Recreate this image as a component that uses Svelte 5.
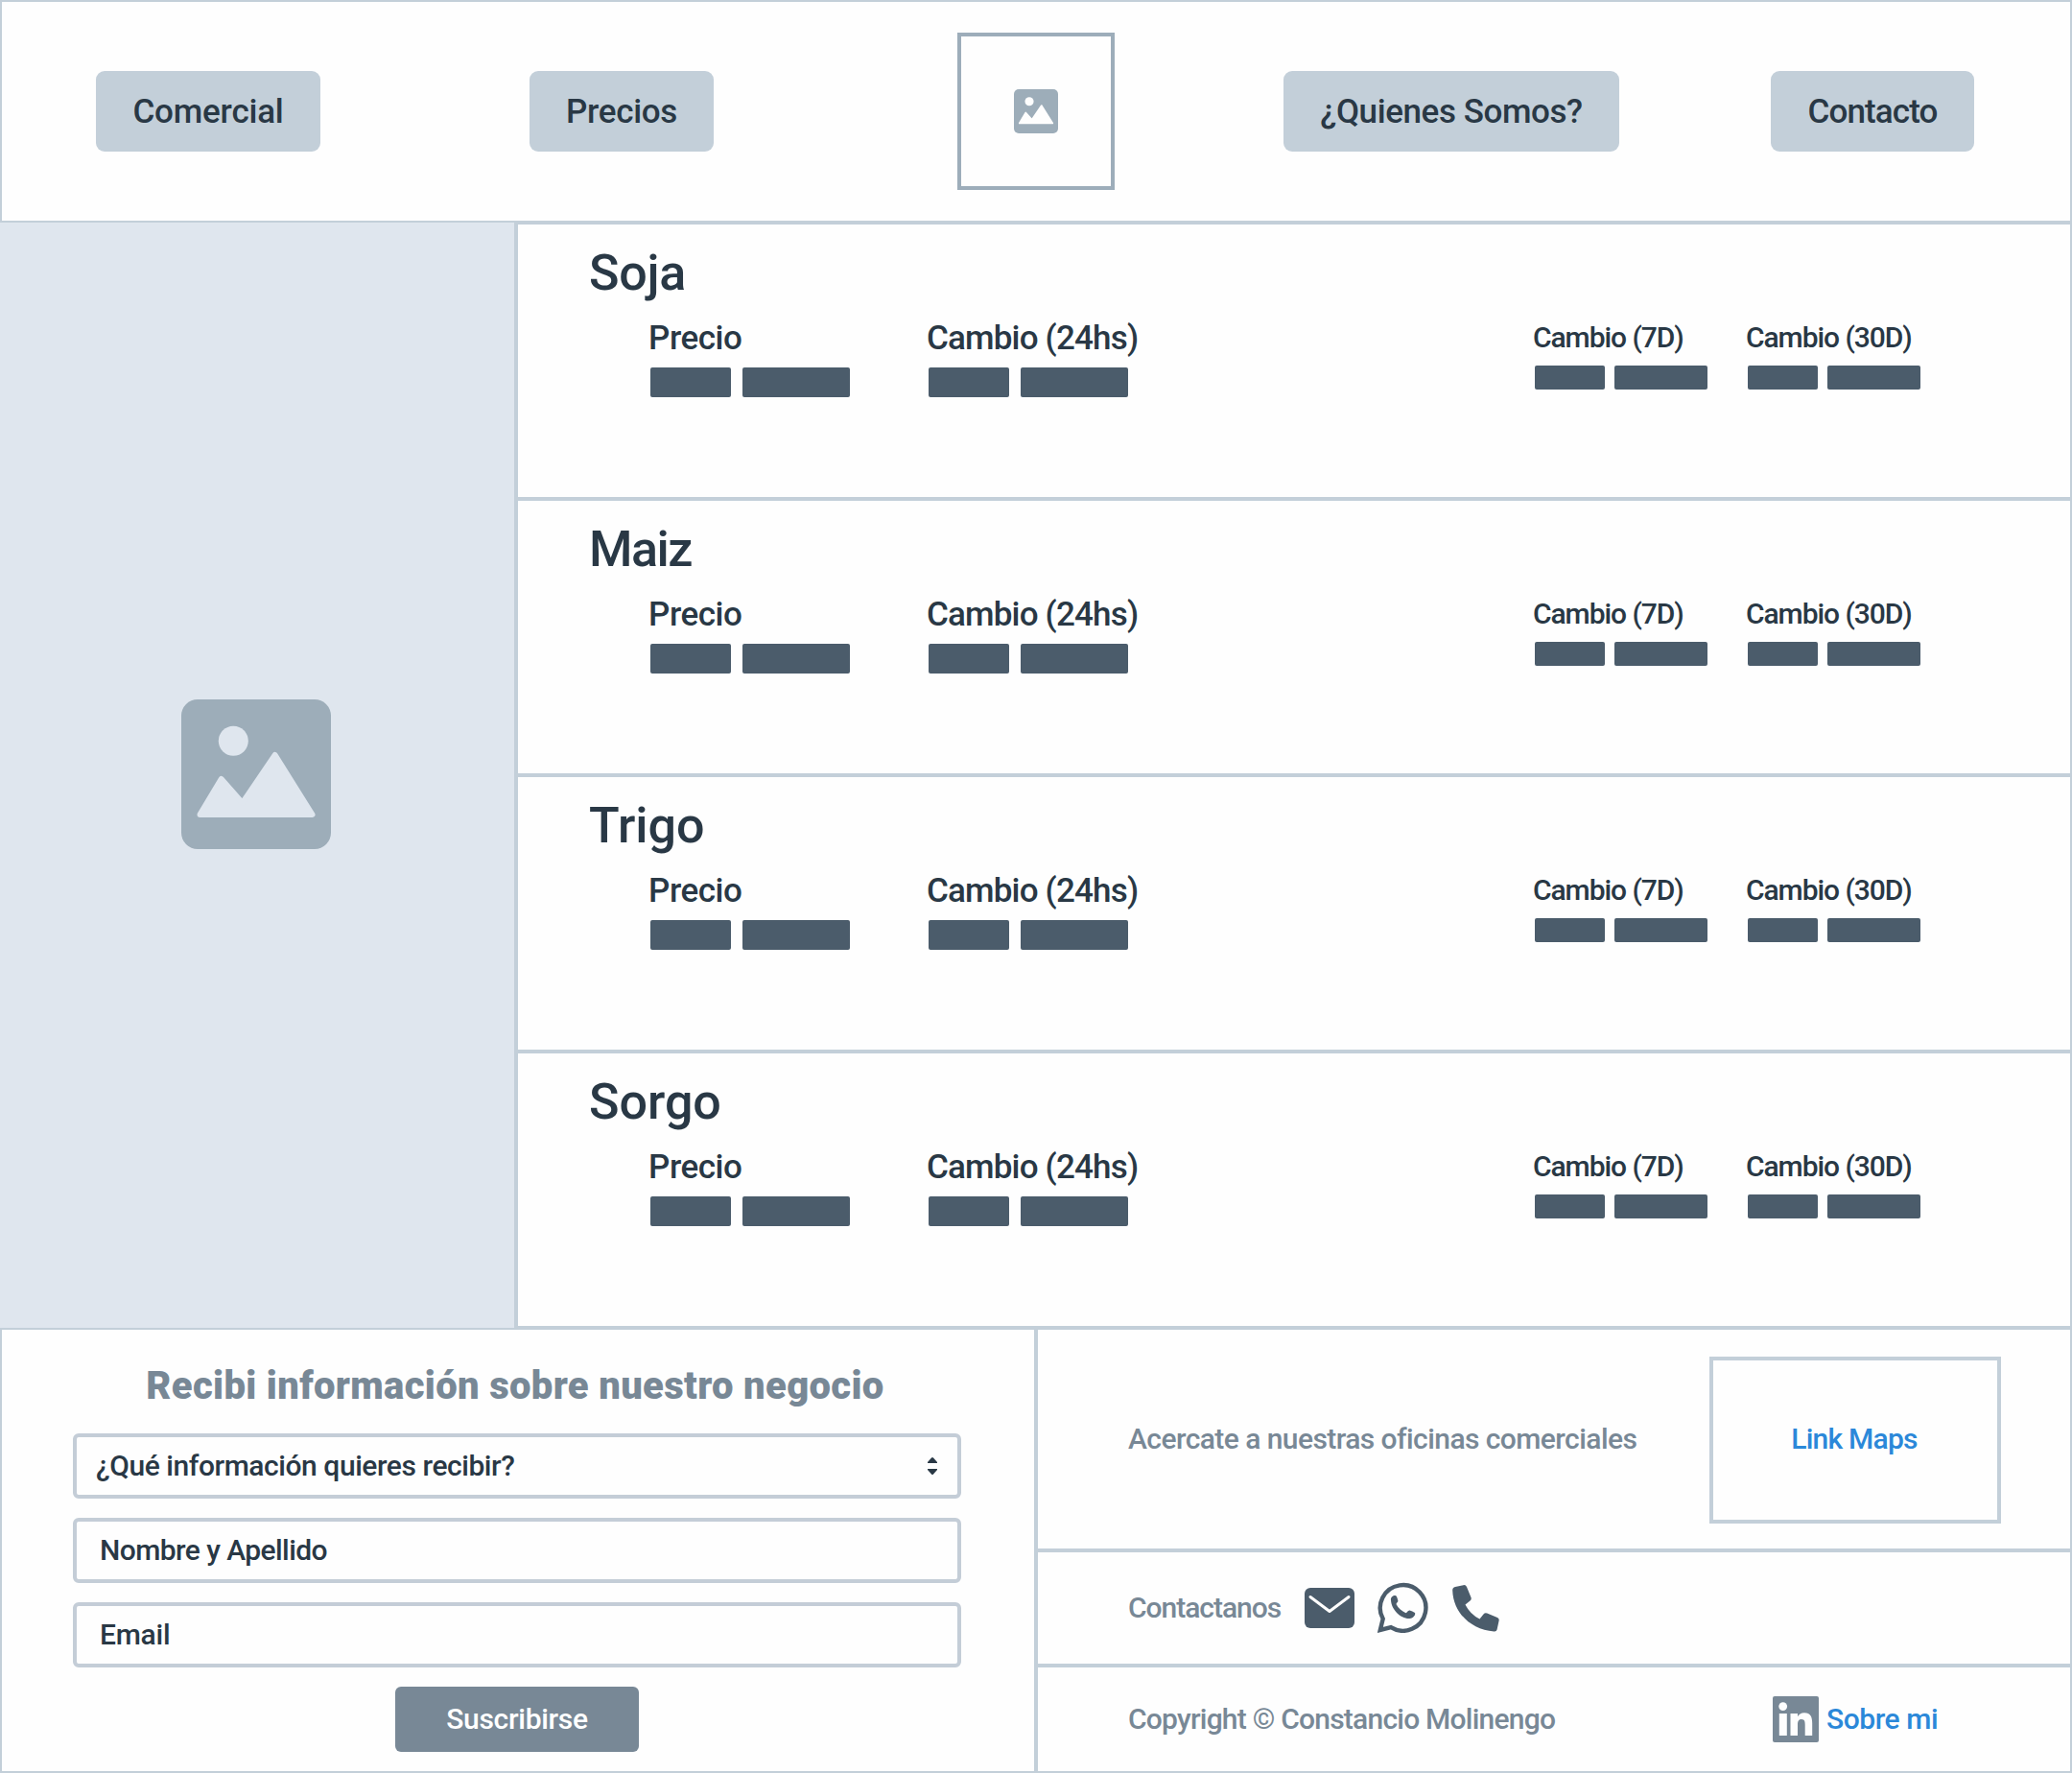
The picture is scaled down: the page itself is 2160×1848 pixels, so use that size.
<script>
  const rows = [
    { name: 'Soja', tone: 'snug' },
    { name: 'Maiz', tone: 'tight' },
    { name: 'Trigo', tone: '' },
    { name: 'Sorgo', tone: '' },
  ];
</script>

{#snippet picture(cls)}
  <svg class={cls} viewBox="0 0 156 156" aria-hidden="true">
    <rect class="pic-bg" width="156" height="156" rx="17" />
    <circle class="pic-fg" cx="54.3" cy="43.3" r="15.5" />
    <path class="pic-fg pic-hill" d="M19.5 120 L41.7 83 L63.7 108 L97.7 58 L136.5 120 Z" />
  </svg>
{/snippet}

{#snippet metric(label, size)}
  <div class="metric {size}">
    <span class="label">{label}</span>
    <div class="bars"><i class="bar short"></i><i class="bar long"></i></div>
  </div>
{/snippet}

<div class="page">
  <header>
    <button class="nav comercial">Comercial</button>
    <button class="nav precios">Precios</button>
    <div class="logo">{@render picture('pic-small')}</div>
    <button class="nav quienes">¿Quienes Somos?</button>
    <button class="nav contacto">Contacto</button>
  </header>

  <main>
    <aside>{@render picture('pic-large')}</aside>
    <div class="rows">
      {#each rows as row}
        <section>
          <h2 class={row.tone}>{row.name}</h2>
          <div class="metrics">
            {@render metric('Precio', 'big first')}
            {@render metric('Cambio (24hs)', 'big wide')}
            {@render metric('Cambio (7D)', 'small week')}
            {@render metric('Cambio (30D)', 'small')}
          </div>
        </section>
      {/each}
    </div>
  </main>

  <footer>
    <form>
      <h3>Recibi información sobre nuestro negocio</h3>
      <div class="field select">
        <span class="question">¿Qué información quieres recibir?</span>
        <svg width="10" height="18" viewBox="0 0 10 18" aria-hidden="true">
          <path d="M0 6V5L4 .6Q5 -.4 6 .6L10 5V6ZM0 12V13L4 17.4Q5 18.4 6 17.4L10 13V12Z" />
        </svg>
      </div>
      <div class="field"><span class="name">Nombre y Apellido</span></div>
      <div class="field"><span class="email">Email</span></div>
      <button type="button" class="submit">Suscribirse</button>
    </form>

    <div class="info">
      <div class="cell offices">
        <span class="acercate">Acercate a nuestras oficinas comerciales</span>
        <a class="map" href="#maps"><span>Link Maps</span></a>
      </div>
      <div class="cell contact">
        <span class="contactanos">Contactanos</span>
        <svg class="mail" width="52" height="42" viewBox="0 0 52 42" aria-hidden="true">
          <rect width="52" height="42" rx="6" />
          <path class="flap" d="M6 9.5L26 24.5L46 9.5" />
        </svg>
        <svg class="whatsapp" width="53" height="53" viewBox="0 0 53 53" aria-hidden="true">
          <path class="bubble" d="M2.8 50L5.7 38.3A23.8 23.8 0 1 1 14 47.1Z" />
          <path d="M14 19C13.5 16 16 13.5 18.5 14C20.5 14.5 21 18 21.4 19.5C21.6 21 19.5 21.8 19.5 23C21.5 27 25.5 30.5 29.5 32.2C31 32 31.5 29.3 33.5 29.5C35.5 29.8 37 31 39 32C40 34 37.5 37.5 33.5 38C24 38.5 14.5 28.5 14 19Z" />
        </svg>
        <svg class="phone" width="49" height="49" viewBox="0 0 49 49" aria-hidden="true">
          <path d="M3 2L11.5 .2Q14 -.3 15 2L19.5 13Q20.3 15 18.5 16.5L13.5 20.5Q18.5 30.5 28.5 35.5L32.5 30.5Q34 28.6 36.3 29.5L47 34Q49.1 35 48.6 37.3L46.6 46.4Q46 48.8 43.5 48.5C19 46.5 1 29 .2 5.5Q.2 2.7 3 2Z" />
        </svg>
      </div>
      <div class="cell legal">
        <span class="copyright">Copyright © Constancio Molinengo</span>
        <svg class="linkedin" width="48" height="48" viewBox="0 0 48 48" aria-hidden="true">
          <rect width="48" height="48" rx="2" />
          <g class="mark">
            <circle cx="10.7" cy="10.6" r="4.4" />
            <rect x="6.8" y="18" width="8" height="23" />
            <path d="M18.5 18H26V21.2C27 19.3 29.5 17.3 33 17.3C39.5 17.3 41.2 21.8 41.2 28V41H33.7V29.7C33.7 27 33.5 24 30 24C26.6 24 26 26.6 26 29.5V41H18.5Z" />
          </g>
        </svg>
        <a class="sobre" href="#sobre">Sobre mi</a>
      </div>
    </div>
  </footer>
</div>

<style>
  :global(body) { background: #fefefe; }
  * { box-sizing: border-box; }
  .page {
    width: 2160px;
    height: 1848px;
    display: flex;
    flex-direction: column;
    font-family: Roboto, "Liberation Sans", sans-serif;
    font-weight: 500;
    font-size: 30px;
    line-height: 36px;
    color: #293845;
    background: #fefefe;
    white-space: nowrap;
    overflow: hidden;
  }
  button { font: inherit; border: 0; padding: 0; color: inherit; display: block; }
  a { color: #2b88d9; text-decoration: none; }
  h2, h3 { margin: 0; }

  header {
    height: 232px;
    flex: none;
    border: 2px solid #c3cfd9;
    display: flex;
    align-items: center;
    padding: 0 100px 0 98px;
  }
  .nav { height: 84px; border-radius: 9px; background: #c3cfd9; font-size: 35px; padding-top: 2px; }
  .comercial { width: 234px; margin-right: 218px; letter-spacing: -0.2px; }
  .precios { width: 192px; margin-right: 254px; letter-spacing: -0.3px; }
  .quienes { width: 350px; margin-right: 158px; letter-spacing: -0.42px; }
  .contacto { width: 212px; letter-spacing: -0.9px; }
  .logo {
    width: 164px;
    height: 164px;
    margin-right: 176px;
    border: 4px solid #9dadba;
    display: grid;
    place-items: center;
  }
  svg { display: block; flex: none; fill: #4b5c6b; }
  .pic-small { width: 46px; height: 46px; --hole: #fefefe; }
  .pic-large { width: 156px; height: 156px; --hole: #dfe6ee; }
  .pic-bg { fill: #9dadb9; }
  .pic-fg { fill: var(--hole); }
  .pic-hill { stroke: var(--hole); stroke-width: 6; stroke-linejoin: round; }

  main { height: 1152px; flex: none; display: flex; }
  aside {
    width: 536px;
    padding: 0 2px 2px 0;
    background: #dfe6ee;
    display: grid;
    place-items: center;
  }
  .rows {
    flex: 1;
    border-left: 4px solid #c3cfd9;
    border-right: 2px solid #c3cfd9;
    margin-top: -2px;
    height: 1156px;
    border-top: 4px solid #c3cfd9;
  }
  section { height: 288px; border-bottom: 4px solid #c3cfd9; padding: 21px 0 0 74px; }
  h2 { font-size: 52px; line-height: 60px; font-weight: 500; }
  .snug { letter-spacing: -0.3px; }
  .tight { letter-spacing: -1.5px; }
  .metrics { display: flex; padding-left: 64px; margin-top: 18px; }
  .metric { display: flex; flex-direction: column; }
  .first { width: 290px; }
  .wide { width: 632px; }
  .week { width: 222px; }
  .label { margin-left: -2px; }
  .big .label { font-size: 35px; line-height: 40px; letter-spacing: -0.82px; }
  .first .label { letter-spacing: -0.45px; }
  .small .label { line-height: 38px; letter-spacing: -1.07px; }
  .bars { display: flex; }
  .bar { background: #4b5c6b; border-radius: 2px; }
  .big .bars { gap: 11.5px; margin-top: 10px; }
  .big .bar { height: 31px; }
  .big .short { width: 84.3px; }
  .big .long { width: 112px; }
  .small .bars { gap: 10px; margin-top: 10.2px; }
  .small .bar { height: 24.5px; }
  .small .short { width: 72.7px; }
  .small .long { width: 97px; }

  footer { height: 464px; flex: none; display: flex; }
  form {
    width: 1078px;
    border: solid #c3cfd9;
    border-width: 2px 0 2px 2px;
    display: flex;
    flex-direction: column;
    align-items: center;
    gap: 20px;
    padding: 35px 76px 0 74px;
  }
  h3 {
    font-size: 40px;
    line-height: 48px;
    font-weight: 900;
    color: #788896;
    margin: 0 4px 5px 0;
    letter-spacing: 0.34px;
  }
  .field {
    width: 926px;
    height: 68px;
    flex: none;
    border: 4px solid #c4cdd7;
    border-radius: 6px;
    padding: 0 21px 0 24px;
    display: flex;
    align-items: center;
    justify-content: space-between;
  }
  .select { padding-left: 20px; }
  .select svg { fill: #293845; }
  .question { letter-spacing: -0.44px; }
  .name { letter-spacing: -0.57px; }
  .email { letter-spacing: -0.25px; }
  .submit {
    width: 254px;
    height: 68px;
    border-radius: 6px;
    background: #788896;
    color: #fff;
    letter-spacing: -0.3px;
  }
  .info {
    flex: 1;
    border: solid #c3cfd9;
    border-width: 2px 2px 2px 4px;
    color: #788896;
    display: flex;
    flex-direction: column;
  }
  .cell { display: flex; align-items: center; padding-left: 94px; }
  .offices { height: 232px; border-bottom: 4px solid #c3cfd9; padding-top: 2px; }
  .contact { height: 120px; border-bottom: 4px solid #c3cfd9; }
  .legal { height: 108px; }
  .acercate { width: 606px; letter-spacing: -0.57px; padding-bottom: 2px; }
  .map {
    width: 304px;
    height: 174px;
    padding: 0 2px 2px 0;
    border: 4px solid #c3cfd9;
    display: grid;
    place-items: center;
    letter-spacing: -0.77px;
  }
  .contactanos { width: 184px; letter-spacing: -1.03px; }
  .whatsapp { margin: 0 0 2px 24px; }
  .bubble { fill: none; stroke: #4b5c6b; stroke-width: 4.4; }
  .phone { margin-left: 25px; }
  .flap { fill: none; stroke: #fefefe; stroke-width: 3; stroke-linecap: round; stroke-linejoin: round; }
  .copyright { width: 672px; letter-spacing: -0.77px; }
  .linkedin { fill: #788896; }
  .mark { fill: #fefefe; }
  .sobre { margin-left: 8px; letter-spacing: -0.45px; }
</style>
